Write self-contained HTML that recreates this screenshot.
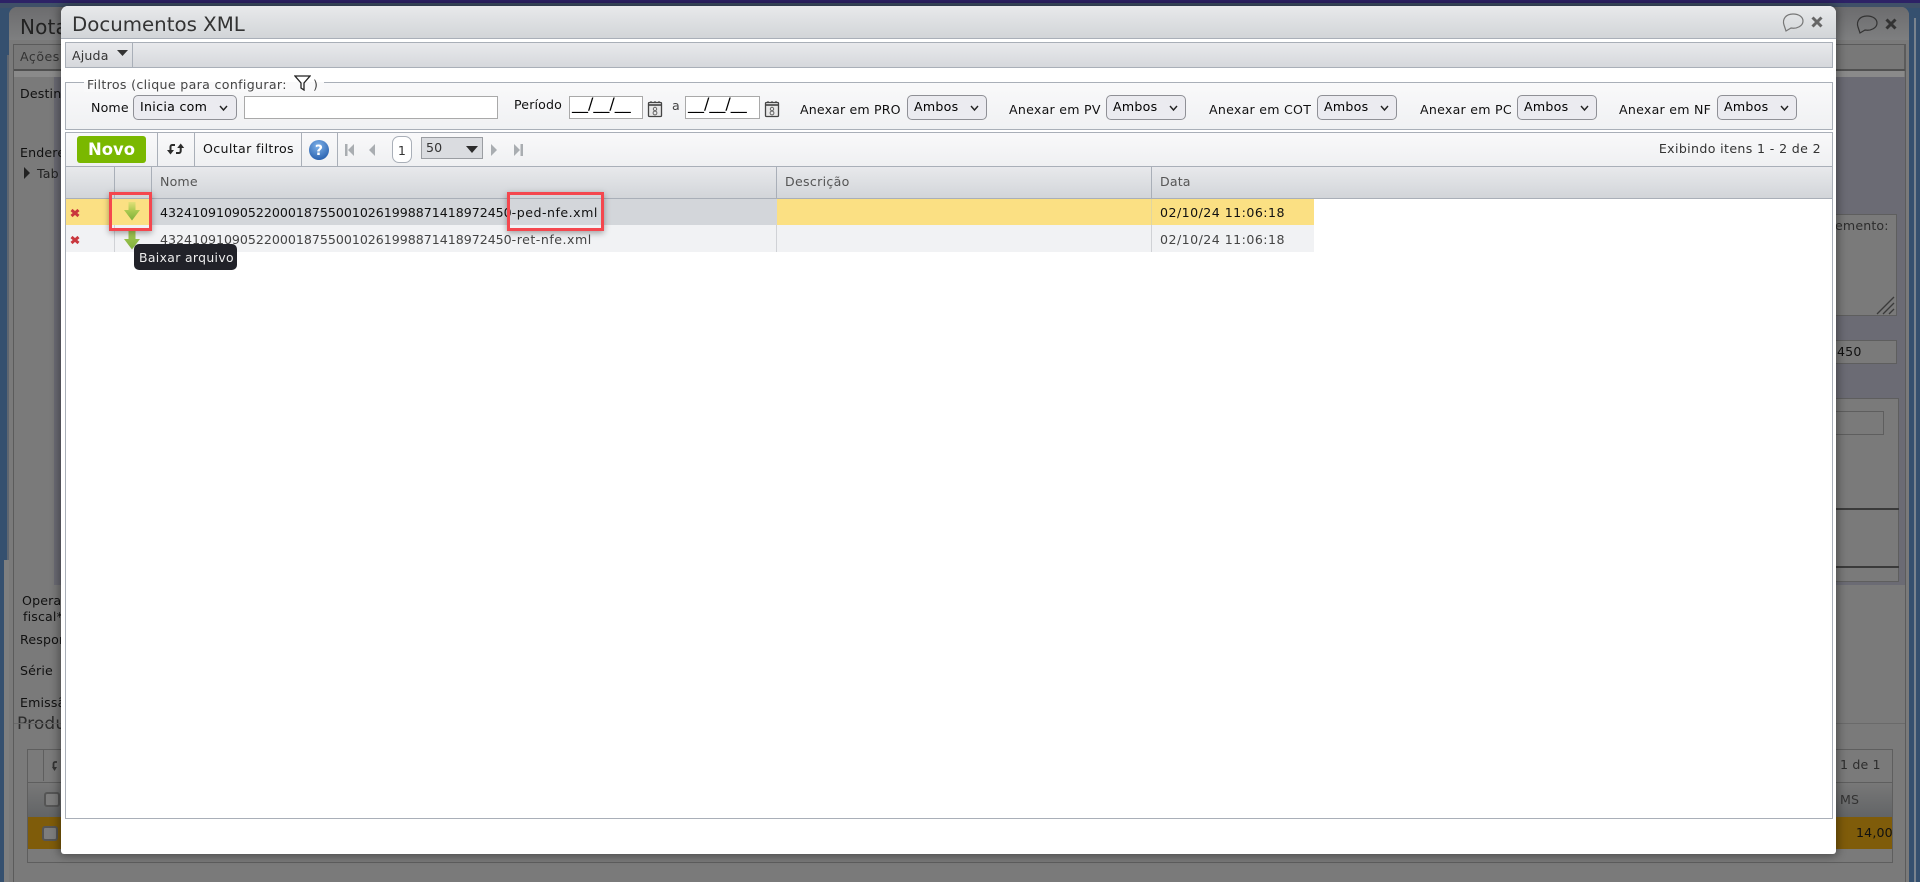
<!DOCTYPE html>
<html lang="pt"><head><meta charset="utf-8"><title>Documentos XML</title>
<style>
html,body{margin:0;padding:0;width:1920px;height:882px;overflow:hidden;background:#35506f}
body{position:relative;font-family:"DejaVu Sans","Liberation Sans",sans-serif;font-size:12.6px;color:#000;letter-spacing:.15px}
div,span,svg{position:absolute;box-sizing:border-box}
.t{white-space:nowrap;line-height:20px;height:20px}
.sel{background:#ebebf0;border:1px solid #8f9096;border-radius:5px;height:25px;top:95px}
.sel span{left:6px;top:1px;line-height:20px;white-space:nowrap;letter-spacing:.25px}
.sel svg{top:9px}
.box{border:1px solid #5e5e5e}
.vs{width:1px;background:#a9afb8}
.date{background:#fff;border:1px solid #a9a9a9;top:96px;height:23px;width:74px}
.date span{left:2px;top:-4px;line-height:22px;font-size:16px;letter-spacing:0;white-space:nowrap}
.rb{border:3px solid #f4474e;box-shadow:0 2px 6px rgba(0,0,0,.35)}
.x{position:static;letter-spacing:.5px}
</style></head><body>

<!-- dimmed background -->
<div style="left:0;top:0;width:1920px;height:3px;background:#2d2266"></div>
<div style="left:0;top:3px;width:1920px;height:5px;background:#3f5068"></div>
<div style="left:7px;top:55px;width:2px;height:827px;background:#5f6670"></div>
<div style="left:1914px;top:18px;width:2px;height:864px;background:#79838e"></div>
<div style="left:4px;top:560px;width:9px;height:322px;background:#7f7f7f"></div>
<div style="left:9px;top:7px;width:1900px;height:875px;background:#7a7a7a;border-radius:8px 8px 0 0"></div>
<div style="left:9px;top:7px;width:1900px;height:33px;background:linear-gradient(#6c6c6e,#7e7f80);border-radius:8px 8px 0 0"></div>
<div class="t" style="left:20px;top:15px;font-size:20px;line-height:24px;height:24px;color:#222">Nota</div>
<div style="left:13px;top:44px;width:1892px;height:26px;border:1px solid #5b5b5b;background:#787878"></div>
<div class="t" style="left:20px;top:47px;color:#333;letter-spacing:.5px">Ações</div>
<div style="left:13px;top:69px;width:1892px;height:2px;background:#505050"></div>
<div style="left:14px;top:71px;width:1890px;height:6px;background:#8a8a8a"></div>
<div style="left:14px;top:77px;width:1891px;height:508px;background:#6b6b74"></div>
<div style="left:14px;top:77px;width:40px;height:508px;background:#7a7a7a"></div>
<div style="left:14px;top:585px;width:1891px;height:297px;background:#7a7a7a"></div>
<div style="left:1905px;top:44px;width:1px;height:838px;background:#5b5b5b"></div>
<div style="left:13px;top:44px;width:1px;height:838px;background:#5b5b5b"></div>
<div class="t" style="left:20px;top:84px;color:#111">Destin</div>
<div class="t" style="left:20px;top:143px;color:#111">Endere</div>
<svg style="left:24px;top:167px" width="7" height="12"><path d="M0 0L6 6L0 12Z" fill="#222"/></svg>
<div class="t" style="left:37px;top:164px;color:#222">Tab</div>
<div class="t" style="left:22px;top:591px;color:#111">Opera</div>
<div class="t" style="left:23px;top:607px;color:#111">fiscal*</div>
<div class="t" style="left:20px;top:630px;color:#111">Respor</div>
<div class="t" style="left:20px;top:661px;color:#111">Série</div>
<div class="t" style="left:20px;top:693px;color:#111">Emissã</div>
<div class="t" style="left:17px;top:712px;font-size:17px;line-height:24px;height:24px;color:#2c2c2c">Produ</div>
<div class="box" style="left:27px;top:749px;width:1866px;height:114px"></div>
<div class="vs" style="left:43px;top:750px;height:31px;background:#5e5e5e"></div>
<svg style="left:52px;top:760px" width="9" height="12"><path d="M5 2H3C2 2 1.500 3 1.500 4V8" fill="none" stroke="#333" stroke-width="1.800"/><path d="M0 7H5L2.500 11Z" fill="#333"/></svg>
<div style="left:28px;top:782px;width:1864px;height:35px;background:linear-gradient(#787878,#626466);border-top:1px solid #5e5e5e"></div>
<div style="left:28px;top:817px;width:1864px;height:32px;background:#7f5c0a"></div>
<div style="left:44px;top:792px;width:16px;height:15px;background:#7d7d7d;border:2px solid #555;border-radius:3px"></div>
<div style="left:42px;top:826px;width:16px;height:15px;background:#7d7d7d;border:2px solid #555;border-radius:3px"></div>
<div style="left:14px;top:723px;width:1891px;height:1px;background:#6a6a6a"></div>
<div class="t" style="left:1840px;top:755px;color:#2d2d2d">1 de 1</div>
<div class="t" style="left:1840px;top:790px;color:#333">MS</div>
<div class="t" style="left:1856px;top:823px;color:#111">14,00</div>
<div class="box" style="left:1800px;top:214px;width:97px;height:102px;background:#7a7a7a"></div>
<div class="t" style="left:1835px;top:216px;color:#2d2d2d">emento:</div>
<svg style="left:1876px;top:295px" width="20" height="20"><path d="M1 19L18 2M7 19L18 8M13 19L18 14" stroke="#3a3a3a" stroke-width="1.300"/></svg>
<div class="box" style="left:1800px;top:340px;width:97px;height:24px;background:#7a7a7a"></div>
<div class="t" style="left:1837px;top:342px;color:#111">450</div>
<div class="box" style="left:1800px;top:398px;width:99px;height:184px;background:#7a7a7a"></div>
<div class="box" style="left:1800px;top:411px;width:84px;height:24px"></div>
<div style="left:1800px;top:508px;width:99px;height:2px;background:#3a3a3a"></div>
<div style="left:1800px;top:566px;width:99px;height:2px;background:#3a3a3a"></div>
<svg style="left:1855px;top:12px" width="24" height="24" viewBox="0 0 24 24"><path d="M3 15C1 9 5 4 12 4C18 4 22 7 22 11C22 16 16 19 10 18L5 21Z" fill="none" stroke="#333" stroke-width="1.200"/></svg>
<svg style="left:1885px;top:18px" width="12" height="12"><path d="M1.500 1.500L10.500 10.500M10.500 1.500L1.500 10.500" stroke="#333" stroke-width="3"/></svg>

<!-- modal -->
<div style="left:61px;top:6px;width:1775px;height:848px;background:#fff;border-radius:7px 7px 3px 3px;box-shadow:0 0 9px 2px rgba(0,0,0,.38)"></div>
<div style="left:61px;top:6px;width:1775px;height:33px;background:linear-gradient(#e8e9eb,#d2d5d8);border-radius:7px 7px 0 0;border-bottom:1px solid #a9afb8"></div>
<div class="t" style="left:72px;top:12px;font-size:19.800px;line-height:26px;height:26px;color:#333;letter-spacing:0">Documentos XML</div>
<svg style="left:1781px;top:10px" width="24" height="24" viewBox="0 0 24 24"><path d="M3 15C1 9 5 4 12 4C18 4 22 7 22 11C22 16 16 19 10 18L5 21Z" fill="none" stroke="#777" stroke-width="1.200"/></svg>
<svg style="left:1811px;top:16px" width="12" height="12"><path d="M1.500 1.500L10.500 10.500M10.500 1.500L1.500 10.500" stroke="#666" stroke-width="3"/></svg>

<!-- panel frame -->
<div style="left:65px;top:166px;width:1768px;height:653px;border:1px solid #a9afb8;background:#fff"></div>

<!-- menu bar -->
<div style="left:65px;top:42px;width:1768px;height:26px;background:linear-gradient(#e8e9ec,#d6d8dc);border:1px solid #a9afb8"></div>
<div class="vs" style="left:132px;top:43px;height:24px"></div>
<div class="t" style="left:72px;top:46px;color:#333">Ajuda</div>
<svg style="left:117px;top:50px" width="11" height="6"><path d="M0 0H11L5.500 6Z" fill="#333"/></svg>

<!-- filters -->
<div style="left:65px;top:82px;width:1768px;height:48px;border:1px solid #a9afb8;background:linear-gradient(#f9f9fa,#f0f1f3)"></div>
<div style="left:84px;top:76px;width:240px;height:16px;background:linear-gradient(#fff 6px,#f9f9fa 6px)"></div>
<div class="t" style="left:87px;top:75px;color:#444;letter-spacing:.33px">Filtros (clique para configurar:</div>
<svg style="left:294px;top:75px" width="17" height="16" viewBox="0 0 17 16"><path d="M1 1H16L10 8V15L7 13V8Z" fill="none" stroke="#222" stroke-width="1.300"/></svg>
<div class="t" style="left:313px;top:75px;color:#444">)</div>

<div class="t" style="left:91px;top:98px;color:#111">Nome</div>
<div class="sel" style="left:133px;width:104px"><span style="letter-spacing:.3px">Inicia com</span><svg style="left:85px" width="10" height="7"><path d="M1 1L4.500 5L8 1" fill="none" stroke="#222" stroke-width="1.400"/></svg></div>
<div style="left:244px;top:96px;width:254px;height:23px;background:#fff;border:1px solid #a9a9a9"></div>
<div class="t" style="left:514px;top:95px;color:#111">Período</div>
<div class="date" style="left:569px"><span>__/__/__</span></div>
<svg style="left:647px;top:100px" width="16" height="18" viewBox="0 0 16 18"><rect x="1.500" y="2.500" width="13" height="14" rx="1" fill="#e8e8e8" stroke="#444" stroke-width="1.300"/><path d="M1.500 5H14.500" stroke="#444" stroke-width="1.600"/><path d="M4 1V3M8 1V3M12 1V3" stroke="#444"/><circle cx="8" cy="9" r="1.700" fill="none" stroke="#666"/><circle cx="8" cy="13" r="1.900" fill="none" stroke="#666"/></svg>
<div class="t" style="left:672px;top:96px;color:#444">a</div>
<div class="date" style="left:685px;width:75px"><span>__/__/__</span></div>
<svg style="left:764px;top:100px" width="16" height="18" viewBox="0 0 16 18"><rect x="1.500" y="2.500" width="13" height="14" rx="1" fill="#e8e8e8" stroke="#444" stroke-width="1.300"/><path d="M1.500 5H14.500" stroke="#444" stroke-width="1.600"/><path d="M4 1V3M8 1V3M12 1V3" stroke="#444"/><circle cx="8" cy="9" r="1.700" fill="none" stroke="#666"/><circle cx="8" cy="13" r="1.900" fill="none" stroke="#666"/></svg>

<div class="t" style="left:800px;top:100px;color:#111">Anexar em PRO</div>
<div class="sel" style="left:907px;width:80px"><span>Ambos</span><svg style="left:62px" width="10" height="7"><path d="M1 1L4.500 5L8 1" fill="none" stroke="#222" stroke-width="1.400"/></svg></div>
<div class="t" style="left:1009px;top:100px;color:#111;letter-spacing:.25px">Anexar em PV</div>
<div class="sel" style="left:1106px;width:80px"><span>Ambos</span><svg style="left:62px" width="10" height="7"><path d="M1 1L4.500 5L8 1" fill="none" stroke="#222" stroke-width="1.400"/></svg></div>
<div class="t" style="left:1209px;top:100px;color:#111;letter-spacing:.25px">Anexar em COT</div>
<div class="sel" style="left:1317px;width:80px"><span>Ambos</span><svg style="left:62px" width="10" height="7"><path d="M1 1L4.500 5L8 1" fill="none" stroke="#222" stroke-width="1.400"/></svg></div>
<div class="t" style="left:1420px;top:100px;color:#111;letter-spacing:.25px">Anexar em PC</div>
<div class="sel" style="left:1517px;width:80px"><span>Ambos</span><svg style="left:62px" width="10" height="7"><path d="M1 1L4.500 5L8 1" fill="none" stroke="#222" stroke-width="1.400"/></svg></div>
<div class="t" style="left:1619px;top:100px;color:#111;letter-spacing:.25px">Anexar em NF</div>
<div class="sel" style="left:1717px;width:80px"><span>Ambos</span><svg style="left:62px" width="10" height="7"><path d="M1 1L4.500 5L8 1" fill="none" stroke="#222" stroke-width="1.400"/></svg></div>

<!-- toolbar -->
<div style="left:65px;top:132px;width:1768px;height:35px;border:1px solid #a9afb8;background:linear-gradient(#f9f9fa,#eff0f2)"></div>
<div style="left:77px;top:136px;width:69px;height:27px;background:#7ab800;border-radius:3px;color:#fff;font-weight:bold;font-size:16.400px;line-height:27px;text-align:center;letter-spacing:0">Novo</div>
<div class="vs" style="left:157px;top:133px;height:33px"></div>
<div class="vs" style="left:194px;top:133px;height:33px"></div>
<div class="vs" style="left:301px;top:133px;height:33px"></div>
<div class="vs" style="left:337px;top:133px;height:33px"></div>
<svg style="left:167px;top:142px" width="18" height="14" viewBox="0 0 18 14"><path d="M8 3H5C4 3 3.500 4 3.500 5V9" fill="none" stroke="#2c2c2c" stroke-width="2"/><path d="M0 8H7L3.500 12.500Z" fill="#2c2c2c"/><path d="M9 11H12C13 11 13.700 10 13.700 9V5" fill="none" stroke="#2c2c2c" stroke-width="2"/><path d="M10.200 6H17.200L13.700 1.500Z" fill="#2c2c2c"/></svg>
<div class="t" style="left:203px;top:139px;color:#111;letter-spacing:.35px">Ocultar filtros</div>
<svg style="left:309px;top:140px" width="20" height="20" viewBox="0 0 20 20"><defs><radialGradient id="h" cx=".45" cy=".3" r=".8"><stop offset="0" stop-color="#7fb3ea"/><stop offset="1" stop-color="#1f57a8"/></radialGradient></defs><circle cx="10" cy="10" r="10" fill="url(#h)"/><text x="10" y="15" text-anchor="middle" font-family="DejaVu Sans,sans-serif" font-weight="bold" font-size="14" fill="#fff">?</text></svg>
<svg style="left:344px;top:142px" width="180" height="16" viewBox="0 0 180 16"><g fill="#a9adb1"><rect x="1" y="2" width="2.500" height="12"/><path d="M10 2V14L4 8Z"/><path d="M31 2V14L25 8Z"/><path d="M147 2V14L153 8Z"/><path d="M170 2V14L176 8Z"/><rect x="176.500" y="2" width="2.500" height="12"/></g></svg>
<div style="left:392px;top:136px;width:20px;height:27px;background:#fff;border:1px solid #a9afb8;border-radius:7px;text-align:center;line-height:27px;color:#333">1</div>
<div style="left:421px;top:137px;width:62px;height:22px;background:#dadce0;border:1px solid #9a9da2"></div>
<div class="t" style="left:426px;top:138px;color:#333">50</div>
<svg style="left:466px;top:146px" width="12" height="7"><path d="M0 0H12L6 7Z" fill="#2c2c2c"/></svg>
<div class="t" style="left:1655px;top:139px;color:#333;width:166px;text-align:right;letter-spacing:.36px">Exibindo itens 1 - 2 de 2</div>

<!-- grid header -->
<div style="left:66px;top:167px;width:1766px;height:32px;background:linear-gradient(#e8e9ec,#d2d5d9);border-bottom:1px solid #a9afb8"></div>
<div class="vs" style="left:114px;top:167px;height:32px"></div>
<div class="vs" style="left:151px;top:167px;height:32px"></div>
<div class="vs" style="left:776px;top:167px;height:32px"></div>
<div class="vs" style="left:1151px;top:167px;height:32px"></div>
<div class="t" style="left:160px;top:172px;color:#555">Nome</div>
<div class="t" style="left:785px;top:172px;color:#555;letter-spacing:.3px">Descrição</div>
<div class="t" style="left:1160px;top:172px;color:#555">Data</div>

<!-- rows -->
<div style="left:66px;top:199px;width:1248px;height:26px;background:#fbe083"></div>
<div style="left:152px;top:199px;width:625px;height:26px;background:#d3d6da"></div>
<div class="vs" style="left:1151px;top:199px;height:26px;background:#e0d6a0"></div>
<div style="left:66px;top:225px;width:1248px;height:27px;background:#f1f2f4"></div>
<div class="vs" style="left:114px;top:225px;height:27px;background:#d0d2d6"></div>
<div class="vs" style="left:776px;top:225px;height:27px;background:#d0d2d6"></div>
<div class="vs" style="left:1151px;top:225px;height:27px;background:#d0d2d6"></div>
<div class="t" style="left:160px;top:203px;color:#111;letter-spacing:-.02px">43241091090522000187550010261998871418972450<span class="x">-ped-nfe.xml</span></div>
<div class="t" style="left:160px;top:230px;color:#444;letter-spacing:-.02px">43241091090522000187550010261998871418972450<span class="x">-ret-nfe.xml</span></div>
<div class="t" style="left:1160px;top:203px;color:#111;letter-spacing:.46px">02/10/24 11:06:18</div>
<div class="t" style="left:1160px;top:230px;color:#444;letter-spacing:.46px">02/10/24 11:06:18</div>
<svg style="left:70px;top:208px" width="10" height="10"><path d="M1.500 2L8.500 8M8.500 2L1.500 8" stroke="#c9373d" stroke-width="3"/></svg>
<svg style="left:70px;top:235px" width="10" height="10"><path d="M1.500 2L8.500 8M8.500 2L1.500 8" stroke="#c9373d" stroke-width="3"/></svg>
<svg style="left:124px;top:202px" width="16" height="19" viewBox="0 0 16 19"><defs><linearGradient id="g1" x1="0" y1="0" x2="0" y2="1"><stop offset="0" stop-color="#e2df78"/><stop offset=".5" stop-color="#a8c84e"/><stop offset="1" stop-color="#7fb03c"/></linearGradient></defs><path d="M4.500 0H11.500V8H16L8 18.500L0 8H4.500Z" fill="url(#g1)"/></svg>
<svg style="left:124px;top:231px" width="16" height="19" viewBox="0 0 16 19"><defs><linearGradient id="g2" x1="0" y1="0" x2="0" y2="1"><stop offset="0" stop-color="#a8cc55"/><stop offset="1" stop-color="#7fb03c"/></linearGradient></defs><path d="M4.500 0H11.500V8H16L8 18.500L0 8H4.500Z" fill="url(#g2)"/></svg>

<!-- tooltip -->
<div style="left:134px;top:244px;width:103px;height:26px;background:#212229;border-radius:5px;color:#eee;line-height:27px;padding-left:5px;white-space:nowrap;font-size:12.400px;letter-spacing:.35px">Baixar arquivo</div>

<!-- highlight boxes -->
<div class="rb" style="left:109px;top:192px;width:43px;height:39px"></div>
<div class="rb" style="left:507px;top:192px;width:97px;height:39px"></div>
</body></html>
